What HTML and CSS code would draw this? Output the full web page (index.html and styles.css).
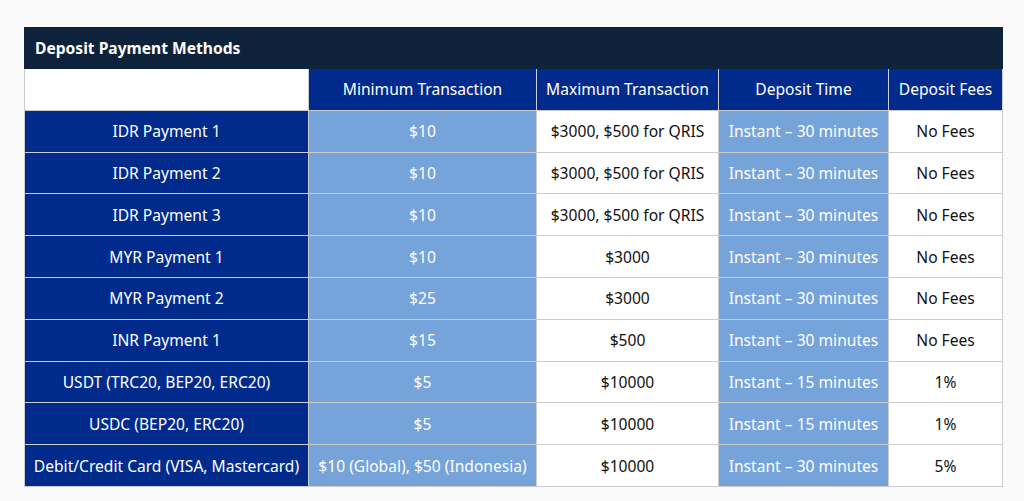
FILE: index.html
```html
<!DOCTYPE html>
<html>
<head>
<meta charset="utf-8">
<link rel="stylesheet" href="styles.css">
</head>
<body>
<div class="wrap">
<table class="deposit">
  <colgroup>
    <col class="c1"><col class="c2"><col class="c3"><col class="c4"><col class="c5">
  </colgroup>
  <tr class="title-row"><th colspan="5" class="title">Deposit Payment Methods</th></tr>
  <tr class="head-row">
    <th class="blank"></th>
    <th class="hd">Minimum Transaction</th>
    <th class="hd">Maximum Transaction</th>
    <th class="hd">Deposit Time</th>
    <th class="hd">Deposit Fees</th>
  </tr>
  <tr><td class="lbl">IDR Payment 1</td><td class="lt">$10</td><td class="wh">$3000, $500 for QRIS</td><td class="lt">Instant – 30 minutes</td><td class="wh">No Fees</td></tr>
  <tr><td class="lbl">IDR Payment 2</td><td class="lt">$10</td><td class="wh">$3000, $500 for QRIS</td><td class="lt">Instant – 30 minutes</td><td class="wh">No Fees</td></tr>
  <tr><td class="lbl">IDR Payment 3</td><td class="lt">$10</td><td class="wh">$3000, $500 for QRIS</td><td class="lt">Instant – 30 minutes</td><td class="wh">No Fees</td></tr>
  <tr><td class="lbl">MYR Payment 1</td><td class="lt">$10</td><td class="wh">$3000</td><td class="lt">Instant – 30 minutes</td><td class="wh">No Fees</td></tr>
  <tr><td class="lbl">MYR Payment 2</td><td class="lt">$25</td><td class="wh">$3000</td><td class="lt">Instant – 30 minutes</td><td class="wh">No Fees</td></tr>
  <tr><td class="lbl">INR Payment 1</td><td class="lt">$15</td><td class="wh">$500</td><td class="lt">Instant – 30 minutes</td><td class="wh">No Fees</td></tr>
  <tr><td class="lbl">USDT (TRC20, BEP20, ERC20)</td><td class="lt">$5</td><td class="wh">$10000</td><td class="lt">Instant – 15 minutes</td><td class="wh">1%</td></tr>
  <tr><td class="lbl">USDC (BEP20, ERC20)</td><td class="lt">$5</td><td class="wh">$10000</td><td class="lt">Instant – 15 minutes</td><td class="wh">1%</td></tr>
  <tr><td class="lbl">Debit/Credit Card (VISA, Mastercard)</td><td class="lt">$10 (Global), $50 (Indonesia)</td><td class="wh">$10000</td><td class="lt">Instant – 30 minutes</td><td class="wh">5%</td></tr>
</table>
</div>
</body>
</html>
```
FILE: styles.css
```css
html, body {
  margin: 0;
  padding: 0;
  background: #fafafa;
}
.wrap {
  padding: 27px 0 0 24px;
}
.deposit {
  border-collapse: collapse;
  table-layout: fixed;
  width: 978px;
  font-family: "Noto Sans", "Open Sans", sans-serif;
  font-size: 15.6px;
  color: #111;
}
.c1 { width: 284px; }
.c2 { width: 228px; }
.c3 { width: 182px; }
.c4 { width: 170px; }
.c5 { width: 114px; }
.deposit td, .deposit th {
  border: 1px solid #cccccc;
  text-align: center;
  font-weight: normal;
  padding: 0 2px;
  height: 40.8px;
  white-space: nowrap;
}
.title-row th.title {
  background: #0e223b;
  color: #fff;
  font-weight: 700;
  text-align: left;
  padding: 0 10px;
  height: 40px;
  border-color: #0e223b;
}
.blank { background: #fff; }
.hd { background: #002b8c; color: #fff; }
.lbl { background: #002b8c; color: #fff; }
.lt { background: #75a3da; color: #fff; }
.wh { background: #fff; color: #111; }
```
